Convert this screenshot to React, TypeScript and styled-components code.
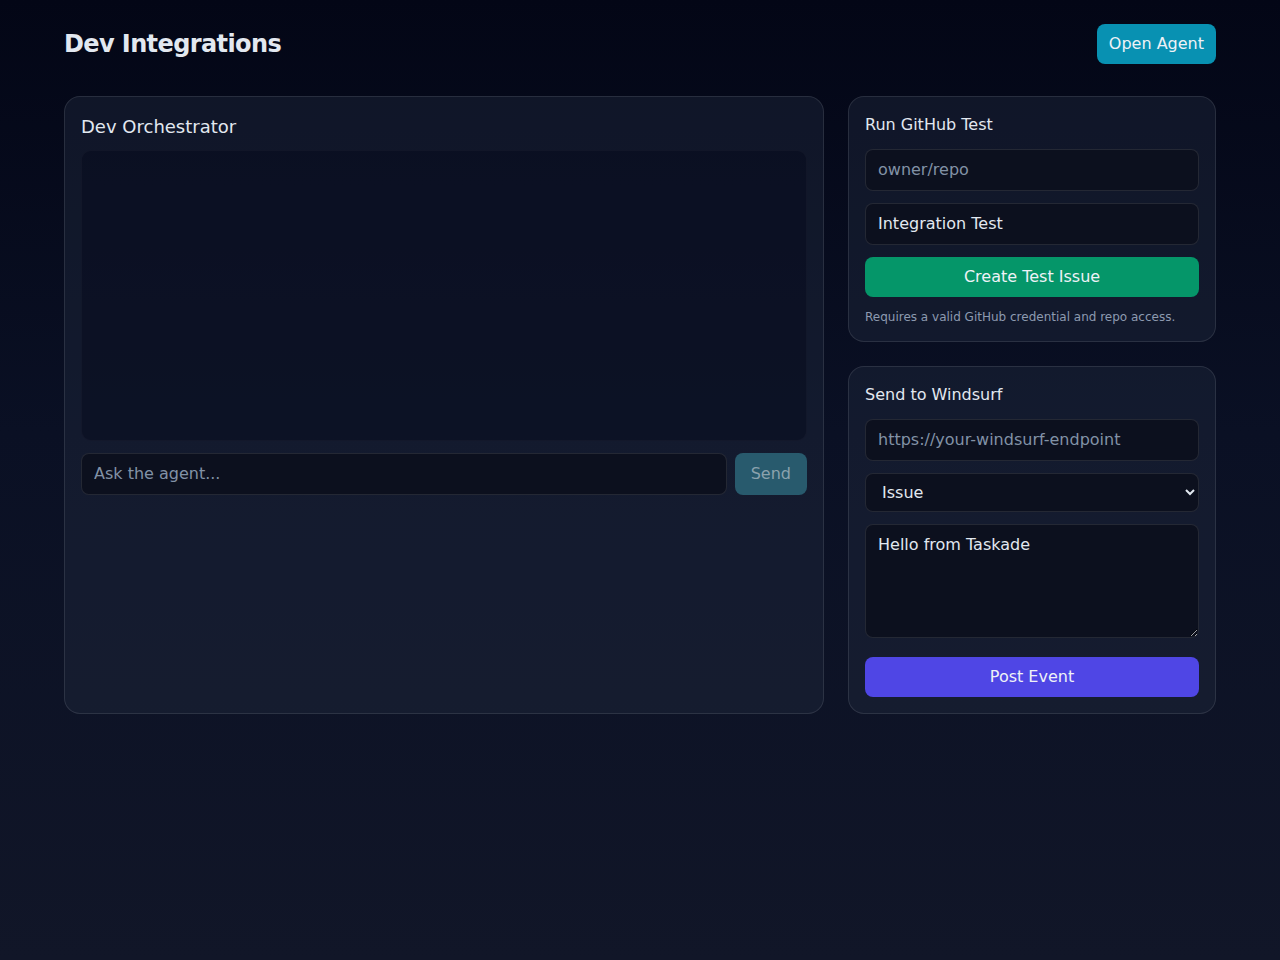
import React from "react";
import styled, { createGlobalStyle } from "styled-components";

const Global = createGlobalStyle`
  * { box-sizing: border-box; }
  html, body { margin: 0; padding: 0; }
  body {
    min-height: 960px;
    background: linear-gradient(180deg, #030616 0%, #0a1024 45%, #111628 100%);
    font-family: "DejaVu Sans", "Noto Sans", sans-serif;
    color: #e2e8f0;
    color-scheme: dark;
  }
`;

const Page = styled.div`
  max-width: 1152px;
  margin: 0 auto;
  padding: 24px 0;
  min-height: 960px;
`;

const Header = styled.header`
  display: flex;
  align-items: center;
  justify-content: space-between;
  margin-bottom: 32px;
`;

const Title = styled.h1`
  margin: 0;
  font-size: 24px;
  line-height: 40px;
  font-weight: 700;
  letter-spacing: -0.025em;
  color: #e2e8f0;
`;

const Button = styled.button<{ $bg: string; $full?: boolean; $muted?: boolean }>`
  display: block;
  height: ${(p) => (p.$full ? "40px" : "42px")};
  padding: 0 ${(p) => (p.$muted ? "16px" : "12px")};
  width: ${(p) => (p.$full ? "100%" : "auto")};
  border: none;
  border-radius: 8px;
  background: ${(p) => p.$bg};
  color: ${(p) => (p.$muted ? "#8ba2ad" : "#eef2f7")};
  font-family: inherit;
  font-size: 16px;
  line-height: 24px;
  cursor: pointer;
  flex-shrink: 0;
`;

const HeaderButton = styled(Button)`
  height: 40px;
`;

const Grid = styled.main`
  display: grid;
  grid-template-columns: repeat(3, minmax(0, 1fr));
  gap: 24px;
  align-items: stretch;
`;

const Card = styled.section<{ $span?: number }>`
  grid-column: span ${(p) => p.$span ?? 1};
  border: 1px solid rgba(255, 255, 255, 0.1);
  border-radius: 16px;
  background: rgba(30, 41, 59, 0.45);
  padding: 16px;
  display: flex;
  flex-direction: column;
`;

const Column = styled.div`
  display: flex;
  flex-direction: column;
  gap: 24px;
`;

const CardTitle = styled.h2<{ $large?: boolean }>`
  margin: 0 0 ${(p) => (p.$large ? "10px" : "12px")};
  font-size: ${(p) => (p.$large ? "18px" : "16px")};
  line-height: ${(p) => (p.$large ? "27px" : "24px")};
  font-weight: 400;
  color: #e2e8f0;
`;

const ChatLog = styled.div`
  height: 291px;
  border-radius: 10px;
  background: rgba(2, 6, 23, 0.38);
  border: 1px solid rgba(255, 255, 255, 0.03);
  margin-bottom: 12px;
`;

const Row = styled.div`
  display: flex;
  gap: 8px;
`;

const Field = styled.input`
  display: block;
  width: 100%;
  height: 42px;
  padding: 7px 12px 9px;
  border: 1px solid rgba(255, 255, 255, 0.1);
  border-radius: 8px;
  background: #0c101e;
  color: #e2e8f0;
  font-family: inherit;
  font-size: 16px;
  line-height: 24px;
  outline: none;
  &::placeholder { color: #8292a6; }
`;

const Stack = styled.div`
  display: flex;
  flex-direction: column;
  gap: 12px;
`;

const Select = styled.select`
  display: block;
  width: 100%;
  height: 39px;
  padding: 0 8px 0 12px;
  border: 1px solid rgba(255, 255, 255, 0.1);
  border-radius: 8px;
  background: #0c101e;
  color: #e2e8f0;
  font-family: inherit;
  font-size: 16px;
  color-scheme: dark;
  outline: none;
`;

const TextArea = styled.textarea`
  display: block;
  width: 100%;
  height: 114px;
  padding: 8px 12px;
  border: 1px solid rgba(255, 255, 255, 0.1);
  border-radius: 8px;
  background: #0c101e;
  color: #e2e8f0;
  font-family: inherit;
  font-size: 16px;
  line-height: 24px;
  resize: vertical;
  outline: none;
  margin-bottom: 7px;
`;

const Note = styled.p`
  margin: 12px 0 0;
  font-size: 12px;
  line-height: 16px;
  color: #8d9ab0;
`;

export default function App() {
  return (
    <>
      <Global />
      <Page>
        <Header>
          <Title>Dev Integrations</Title>
          <HeaderButton $bg="#0891b2">Open Agent</HeaderButton>
        </Header>
        <Grid>
          <Card $span={2}>
            <CardTitle $large>Dev Orchestrator</CardTitle>
            <ChatLog />
            <Row>
              <Field placeholder="Ask the agent..." />
              <Button $bg="#285a6d" $muted>Send</Button>
            </Row>
          </Card>
          <Column>
            <Card>
              <CardTitle>Run GitHub Test</CardTitle>
              <Stack>
                <Field placeholder="owner/repo" />
                <Field defaultValue="Integration Test" />
                <Button $bg="#059669" $full>Create Test Issue</Button>
              </Stack>
              <Note>Requires a valid GitHub credential and repo access.</Note>
            </Card>
            <Card>
              <CardTitle>Send to Windsurf</CardTitle>
              <Stack>
                <Field placeholder="https://your-windsurf-endpoint" />
                <Select defaultValue="issue">
                  <option value="issue">Issue</option>
                  <option value="pr">Pull Request</option>
                </Select>
                <TextArea defaultValue="Hello from Taskade" />
                <Button $bg="#4f46e5" $full>Post Event</Button>
              </Stack>
            </Card>
          </Column>
        </Grid>
      </Page>
    </>
  );
}
